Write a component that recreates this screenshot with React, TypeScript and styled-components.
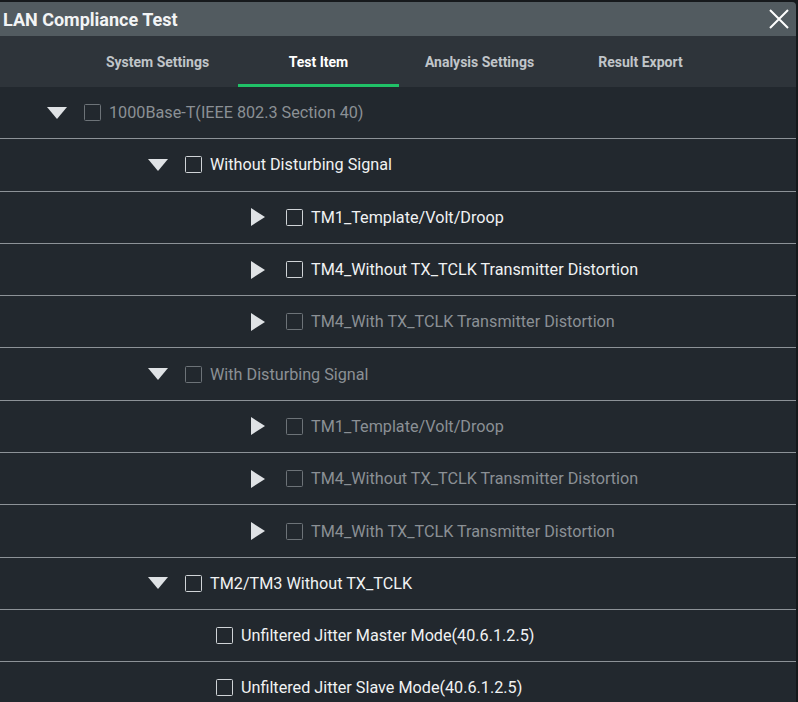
import React from "react";
import styled, { createGlobalStyle } from "styled-components";

const GlobalStyle = createGlobalStyle`
  html, body {
    margin: 0;
    padding: 0;
    background: #16191c;
    font-family: Roboto, "Liberation Sans", sans-serif;
    overflow: hidden;
  }
`;

const Dialog = styled.div`
  width: 796px;
  height: 700px;
  margin-top: 2px;
  display: flex;
  flex-direction: column;
  background: #22282e;
  border-top-right-radius: 4px;
  overflow: hidden;
`;

const TitleBar = styled.div`
  height: 34px;
  flex-shrink: 0;
  display: flex;
  align-items: center;
  justify-content: space-between;
  background: #525b60;
  padding: 0 5px 0 3px;
`;

const Title = styled.div`
  font-size: 18px;
  font-weight: 700;
  color: #f2f4f5;
`;

const CloseButton = styled.div`
  width: 24px;
  height: 24px;
  display: flex;
  align-items: center;
  justify-content: center;
  cursor: pointer;
`;

const TabBar = styled.div`
  height: 51px;
  flex-shrink: 0;
  display: flex;
  padding-left: 77px;
  background: #2e343a;
`;

const Tab = styled.div<{ $active?: boolean }>`
  width: 161px;
  display: flex;
  align-items: center;
  justify-content: center;
  font-size: 14px;
  font-weight: 700;
  color: ${(p) => (p.$active ? "#ffffff" : "#c0c5c9")};
  box-sizing: border-box;
  padding-top: ${(p) => (p.$active ? "3px" : "0")};
  border-bottom: ${(p) => (p.$active ? "3px solid #20c167" : "none")};
`;

const List = styled.div`
  display: flex;
  flex-direction: column;
`;

const Row = styled.div<{ $indent: number }>`
  height: 52.3px;
  flex-shrink: 0;
  box-sizing: border-box;
  border-bottom: 1px solid #8d9297;
  display: flex;
  align-items: center;
  padding-left: ${(p) => p.$indent}px;
`;

const Expander = styled.div`
  width: 37px;
  flex-shrink: 0;
  display: flex;
  align-items: center;
`;

const Box = styled.div<{ $enabled: boolean }>`
  width: 15px;
  height: 15px;
  flex-shrink: 0;
  border: 1.8px solid ${(p) => (p.$enabled ? "#d0d4d7" : "#6d7378")};
  border-radius: 1.5px;
  margin-right: 8px;
`;

const Label = styled.span<{ $enabled: boolean }>`
  font-size: 16.2px;
  white-space: nowrap;
  color: ${(p) => (p.$enabled ? "#f0f2f3" : "#8b9095")};
`;

type Item = {
  label: string;
  indent: number;
  toggle?: "open" | "closed";
  enabled: boolean;
};

const items: Item[] = [
  { label: "1000Base-T(IEEE 802.3 Section 40)", indent: 47, toggle: "open", enabled: false },
  { label: "Without Disturbing Signal", indent: 148, toggle: "open", enabled: true },
  { label: "TM1_Template/Volt/Droop", indent: 249, toggle: "closed", enabled: true },
  { label: "TM4_Without TX_TCLK Transmitter Distortion", indent: 249, toggle: "closed", enabled: true },
  { label: "TM4_With TX_TCLK Transmitter Distortion", indent: 249, toggle: "closed", enabled: false },
  { label: "With Disturbing Signal", indent: 148, toggle: "open", enabled: false },
  { label: "TM1_Template/Volt/Droop", indent: 249, toggle: "closed", enabled: false },
  { label: "TM4_Without TX_TCLK Transmitter Distortion", indent: 249, toggle: "closed", enabled: false },
  { label: "TM4_With TX_TCLK Transmitter Distortion", indent: 249, toggle: "closed", enabled: false },
  { label: "TM2/TM3 Without TX_TCLK", indent: 148, toggle: "open", enabled: true },
  { label: "Unfiltered Jitter Master Mode(40.6.1.2.5)", indent: 216, enabled: true },
  { label: "Unfiltered Jitter Slave Mode(40.6.1.2.5)", indent: 216, enabled: true },
];

const tabs = ["System Settings", "Test Item", "Analysis Settings", "Result Export"];

const Toggle = ({ kind }: { kind: "open" | "closed" }) =>
  kind === "open" ? (
    <svg width="20" height="14" viewBox="0 0 20 14">
      <polygon points="0,1 20,1 10,13" fill="#dfe2e5" />
    </svg>
  ) : (
    <svg width="14" height="18" viewBox="0 0 14 18" style={{ marginLeft: 2 }}>
      <polygon points="0,0 14,9 0,18" fill="#dfe2e5" />
    </svg>
  );

export default function App() {
  return (
    <>
      <GlobalStyle />
      <Dialog>
        <TitleBar>
          <Title>LAN Compliance Test</Title>
          <CloseButton>
            <svg width="22" height="22" viewBox="0 0 22 22">
              <path d="M2 2 L20 20 M20 2 L2 20" stroke="#ffffff" strokeWidth="2" />
            </svg>
          </CloseButton>
        </TitleBar>
        <TabBar>
          {tabs.map((t) => (
            <Tab key={t} $active={t === "Test Item"}>
              {t}
            </Tab>
          ))}
        </TabBar>
        <List>
          {items.map((it, i) => (
            <Row key={i} $indent={it.indent}>
              {it.toggle && (
                <Expander>
                  <Toggle kind={it.toggle} />
                </Expander>
              )}
              <Box $enabled={it.enabled} />
              <Label $enabled={it.enabled}>{it.label}</Label>
            </Row>
          ))}
        </List>
      </Dialog>
    </>
  );
}
